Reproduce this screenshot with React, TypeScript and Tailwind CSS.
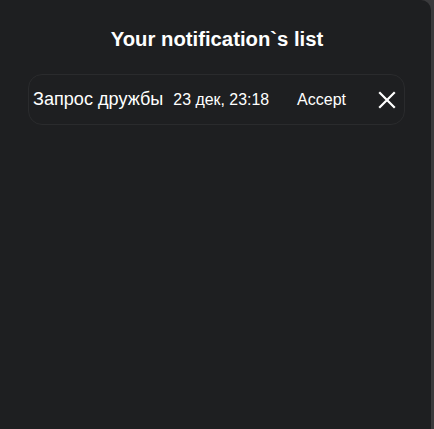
import React from "react";

type Notification = {
    id: number;
    text: string;
    date: string;
};

const notifications: Notification[] = [
    { id: 1, text: "Запрос дружбы", date: "23 дек, 23:18" },
];

const CloseIcon = () => (
    <svg width="18" height="18" viewBox="0 0 18 18" fill="none" stroke="currentColor" strokeWidth="2.2" strokeLinecap="square">
        <path d="M2 2L16 16M16 2L2 16" />
    </svg>
);

const App = () => {
    const generateRows = () => {
        return notifications.map((n) => {
            return (
                <div key={n.id} className="flex items-center h-[51px] ml-[28px] mr-[26px] pl-[4px] rounded-[14px] border border-[#2a2b2d] bg-[#1e1f21]">
                    <span className="text-[18.1px] text-white">{n.text}</span>
                    <span className="ml-[10px] text-[15.9px] text-white">{n.date}</span>
                    <button className="ml-[28px] text-[16px] text-white">Accept</button>
                    <button className="ml-[32px] text-white">
                        <CloseIcon />
                    </button>
                </div>
            );
        });
    };

    return (
        <div className="flex w-[434px] h-[429px] bg-[#3a3a3c] font-['Liberation_Sans',Arial,sans-serif]">
            <div className="w-[431px] h-full bg-[#1e1f21] rounded-tr-[10px] pt-[27px]">
                <h1 className="text-center text-[20.3px] font-bold text-white leading-[24px] pl-[3px]">Your notification`s list</h1>
                <div className="mt-[23px]">
                    {generateRows()}
                </div>
            </div>
        </div>
    );
};

export default App;
